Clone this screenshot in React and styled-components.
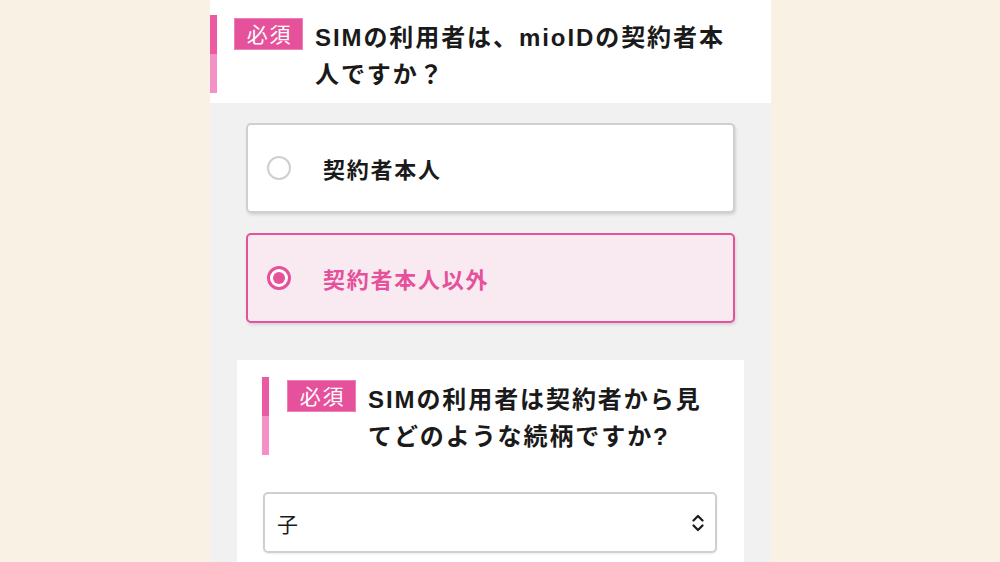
import React from "react";
import styled, { createGlobalStyle, css } from "styled-components";

const PINK = "#e5519a";

const GlobalStyle = createGlobalStyle`
  html, body {
    margin: 0;
    padding: 0;
    background: #faf1e5;
    font-family: "Liberation Sans", "Noto Sans CJK JP", sans-serif;
    color: #1d1d1d;
  }
  * { box-sizing: border-box; }
`;

const Page = styled.div`
  display: flex;
  padding-left: 210px;
  height: 562px;
  overflow: hidden;
`;

const Column = styled.div`
  width: 561px;
  background: #f1f1f1;
  display: flex;
  flex-direction: column;
`;

const Header = styled.header`
  background: #fff;
  padding: 15px 30px 10px 0;
`;

const QuestionHead = styled.div`
  display: flex;
  align-items: flex-start;
`;

const Bar = styled.span`
  width: 7px;
  flex-shrink: 0;
  align-self: stretch;
  background: linear-gradient(#ec5aa3 50%, #f391c6 50%);
`;

const Badge = styled.span`
  flex-shrink: 0;
  margin-left: ${(p) => p.$offset}px;
  margin-top: 3px;
  width: 69px;
  height: 32px;
  display: flex;
  align-items: center;
  justify-content: center;
  padding-left: 2px;
  background: ${PINK};
  box-shadow: inset 0 0 0 1px #ee7fb5;
  color: #fff;
  font-size: 21px;
  font-weight: 400;
  letter-spacing: 0.08em;
  line-height: 1;
`;

const Title = styled.h2`
  margin: 0 0 0 12px;
  padding-top: 4px;
  font-size: 24px;
  font-weight: 700;
  line-height: 37px;
  letter-spacing: 0.08em;
  color: #1a1a1a;
`;

const Body = styled.main`
  flex: 1;
  padding: 20px 27px 0;
`;

const OptionList = styled.div`
  display: flex;
  flex-direction: column;
  gap: 20px;
  margin: 0 9px;
`;

const OptionCard = styled.label`
  height: 90px;
  display: flex;
  align-items: center;
  gap: 32px;
  padding-left: 19px;
  border-radius: 5px;
  border: 2px solid #cfcfcf;
  background: #fff;
  box-shadow: 1px 2px 3px rgba(0, 0, 0, 0.12);
  cursor: pointer;
  ${(p) =>
    p.$checked &&
    css`
      border-color: ${PINK};
      background: #f9e9f1;
    `}
`;

const Radio = styled.span`
  width: 24px;
  height: 24px;
  flex-shrink: 0;
  border-radius: 50%;
  border: 2.5px solid #cfcfcf;
  background: #fff;
  display: flex;
  align-items: center;
  justify-content: center;
  ${(p) =>
    p.$checked &&
    css`
      border: 3px solid ${PINK};
      &::after {
        content: "";
        width: 12px;
        height: 12px;
        border-radius: 50%;
        background: ${PINK};
      }
    `}
`;

const OptionText = styled.span`
  font-size: 22px;
  font-weight: 700;
  letter-spacing: 0.08em;
  color: ${(p) => (p.$checked ? PINK : "#1a1a1a")};
`;

const Panel = styled.section`
  margin-top: 37px;
  background: #fff;
  padding: 17px 27px 30px 25px;
`;

const Select = styled.div`
  margin: 37px 0 0 1px;
  height: 61px;
  border: 2px solid #cfcfcf;
  border-radius: 5px;
  display: flex;
  align-items: center;
  justify-content: space-between;
  padding: 0 11px 0 12px;
  font-size: 21px;
  color: #1a1a1a;
  box-shadow: 0 1px 2px rgba(0, 0, 0, 0.08);
`;

const UpDown = () => (
  <svg width="12" height="18" viewBox="0 0 12 18" fill="none" stroke="#1a1a1a" strokeWidth="2.2" strokeLinecap="round" strokeLinejoin="round">
    <polyline points="1.5,6.5 6,2 10.5,6.5" />
    <polyline points="1.5,11.5 6,16 10.5,11.5" />
  </svg>
);

const options = [
  { label: "契約者本人", checked: false },
  { label: "契約者本人以外", checked: true },
];

export default function App() {
  return (
    <>
      <GlobalStyle />
      <Page>
        <Column>
          <Header>
            <QuestionHead>
              <Bar />
              <Badge $offset={17}>必須</Badge>
              <Title>SIMの利用者は、mioIDの契約者本人ですか？</Title>
            </QuestionHead>
          </Header>
          <Body>
            <OptionList>
              {options.map((o) => (
                <OptionCard key={o.label} $checked={o.checked}>
                  <Radio $checked={o.checked} />
                  <OptionText $checked={o.checked}>{o.label}</OptionText>
                </OptionCard>
              ))}
            </OptionList>
            <Panel>
              <QuestionHead>
                <Bar />
                <Badge $offset={18}>必須</Badge>
                <Title>SIMの利用者は契約者から見てどのような続柄ですか?</Title>
              </QuestionHead>
              <Select>
                <span>子</span>
                <UpDown />
              </Select>
            </Panel>
          </Body>
        </Column>
      </Page>
    </>
  );
}
